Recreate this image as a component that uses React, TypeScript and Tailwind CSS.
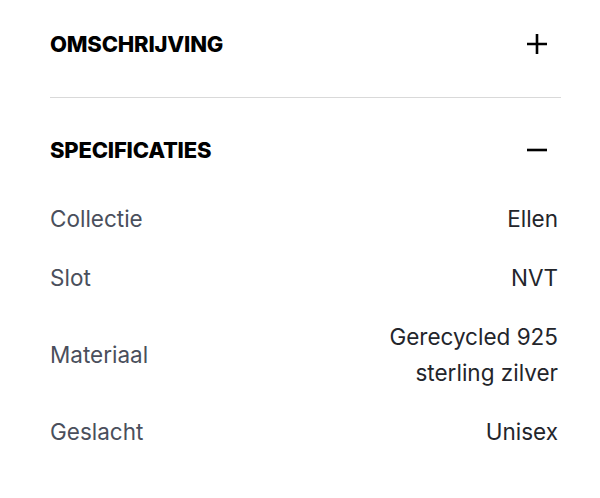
const specs = [
  { label: "Collectie", value: ["Ellen"] },
  { label: "Slot", value: ["NVT"] },
  { label: "Materiaal", value: ["Gerecycled 925", "sterling zilver"] },
  { label: "Geslacht", value: ["Unisex"] },
];

function PlusIcon() {
  return (
    <svg width="20" height="20" viewBox="0 0 20 20" className="mr-[14px]">
      <path d="M10 0v20M0 10h20" stroke="#000" strokeWidth="2.6" />
    </svg>
  );
}

function MinusIcon() {
  return (
    <svg width="20" height="20" viewBox="0 0 20 20" className="mr-[14px]">
      <path d="M0 10h20" stroke="#000" strokeWidth="2.6" />
    </svg>
  );
}

export default function App() {
  return (
    <div className="min-h-screen bg-white pl-[50px] pr-[39px] font-['Inter',sans-serif]">
      <div className="flex items-center justify-between border-b border-[#d9d9d9] pt-[24px] pb-[33px]">
        <h2 className="text-[22px] font-extrabold leading-[40px] tracking-[-0.2px] text-black">OMSCHRIJVING</h2>
        <PlusIcon />
      </div>
      <div className="flex items-center justify-between pt-[32px]">
        <h2 className="text-[22px] font-extrabold leading-[40px] tracking-[-0.2px] text-black">SPECIFICATIES</h2>
        <MinusIcon />
      </div>
      <div className="mt-[31px] flex flex-col gap-[23px] pr-[3px]">
        {specs.map((s) => (
          <div key={s.label} className="flex items-center justify-between text-[22.5px] leading-[36px]">
            <span className="text-[#4a4f5c]">{s.label}</span>
            <span className="text-right text-[#23252b]">
              {s.value.map((v) => (
                <div key={v}>{v}</div>
              ))}
            </span>
          </div>
        ))}
      </div>
    </div>
  );
}
